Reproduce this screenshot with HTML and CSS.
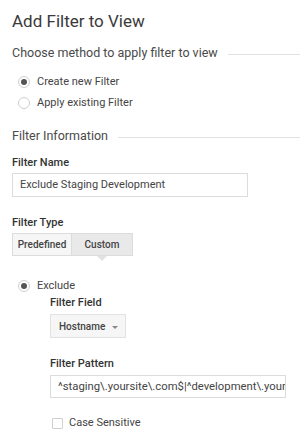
FILE: index.html
```html
<!DOCTYPE html>
<html>
<head>
<meta charset="utf-8">
<link rel="stylesheet" href="styles.css">
</head>
<body>
<div class="page">
  <h1 class="title">Add Filter to View</h1>
  <div class="section-head section-first"><span>Choose method to apply filter to view</span><span class="rule"></span></div>
  <div class="radios">
    <div class="radio"><span class="dot on"></span><span>Create new Filter</span></div>
    <div class="radio"><span class="dot"></span><span>Apply existing Filter</span></div>
  </div>
  <div class="section-head section-info"><span>Filter Information</span><span class="rule"></span></div>
  <div class="label label-name">Filter Name</div>
  <div class="input">Exclude Staging Development</div>
  <div class="label label-type">Filter Type</div>
  <div class="seg">
    <div class="seg-btn">Predefined</div>
    <div class="seg-btn active">Custom</div>
  </div>
  <div class="radio exclude"><span class="dot on"></span><span>Exclude</span></div>
  <div class="sub">
    <div class="label label-field">Filter Field</div>
    <div class="select"><span>Hostname</span><span class="caret"></span></div>
    <div class="label label-pattern">Filter Pattern</div>
    <div class="input input-pattern">^staging\.yoursite\.com$|^development\.yoursite\.com$</div>
    <div class="check"><span class="box"></span><span>Case Sensitive</span></div>
  </div>
</div>
</body>
</html>
```

FILE: styles.css
```css
* { box-sizing: border-box; }
html, body { margin: 0; padding: 0; background: #fff; }
body {
  font-family: Roboto, "Noto Sans", Arial, sans-serif;
  color: #444;
  width: 300px;
  height: 440px;
  overflow: hidden;
}
.page { padding-left: 12px; }

.title {
  margin: 10px 0 0 0;
  font-size: 17px;
  line-height: 22px;
  font-weight: 400;
  color: #3a3a3a;
}

.section-head {
  display: flex;
  align-items: center;
  gap: 10px;
  font-size: 12.5px;
  line-height: 16px;
  color: #4a4a4a;
}
.section-first { margin-top: 13px; }
.section-info { margin-top: 17px; }
.section-head .rule {
  flex: 1;
  height: 1px;
  background: #e2e2e2;
  margin-top: 3px;
}

.radios { margin-top: 13px; display: flex; flex-direction: column; gap: 5px; }
.radio {
  display: flex;
  align-items: center;
  font-size: 11px;
  line-height: 16px;
  color: #444;
}
.dot {
  width: 12px;
  height: 12px;
  border: 1px solid #cfcfcf;
  border-radius: 50%;
  margin-left: 6px;
  margin-right: 7px;
  display: flex;
  align-items: center;
  justify-content: center;
  background: #fff;
}
.dot.on::after {
  content: "";
  width: 6px;
  height: 6px;
  border-radius: 50%;
  background: #555;
}

.label {
  font-size: 11px;
  line-height: 16px;
  font-weight: 500;
  color: #333;
}
.label-name { margin-top: 11px; }
.label-type { margin-top: 18px; }
.label-field { margin-top: 1px; }
.label-pattern { margin-top: 18px; }

.input {
  margin-top: 2px;
  width: 236px;
  height: 24px;
  border: 1px solid #dcdcdc;
  padding: 0 7px;
  font-size: 11px;
  line-height: 22px;
  color: #444;
  white-space: nowrap;
  overflow: hidden;
}
.input-pattern { margin-top: 3px; height: 23px; line-height: 21px; font-size: 11.3px; }

.seg {
  margin-top: 2px;
  display: flex;
}
.seg-btn {
  height: 23px;
  font-size: 10px;
  font-weight: 500;
  line-height: 21px;
  color: #444;
  text-align: center;
  border: 1px solid #dcdcdc;
  background: #f6f6f6;
}
.seg-btn:first-child { width: 60px; }
.seg-btn.active {
  width: 61px;
  border-left: none;
  background: #e9e9e9;
  position: relative;
}
.seg-btn.active::after {
  content: "";
  position: absolute;
  left: 50%;
  bottom: -6px;
  margin-left: -5px;
  border-left: 5px solid transparent;
  border-right: 5px solid transparent;
  border-top: 5px solid #e2e2e2;
}

.exclude { margin-top: 22px; }

.sub { padding-left: 38px; }

.select {
  margin-top: 3px;
  width: 76px;
  height: 24px;
  border: 1px solid #e2e2e2;
  background: #f6f6f6;
  display: flex;
  align-items: center;
  justify-content: space-between;
  padding: 0 7px 0 8px;
  font-size: 10px;
  font-weight: 500;
  color: #444;
}
.caret {
  margin-top: 2px;
  border-left: 3px solid transparent;
  border-right: 3px solid transparent;
  border-top: 3px solid #888;
}

.check {
  margin-top: 17px;
  display: flex;
  align-items: center;
  font-size: 11px;
  line-height: 16px;
  color: #444;
}
.box {
  width: 11px;
  height: 11px;
  border: 1px solid #cfcfcf;
  border-radius: 1px;
  margin-left: 2px;
  margin-right: 6px;
}
```
